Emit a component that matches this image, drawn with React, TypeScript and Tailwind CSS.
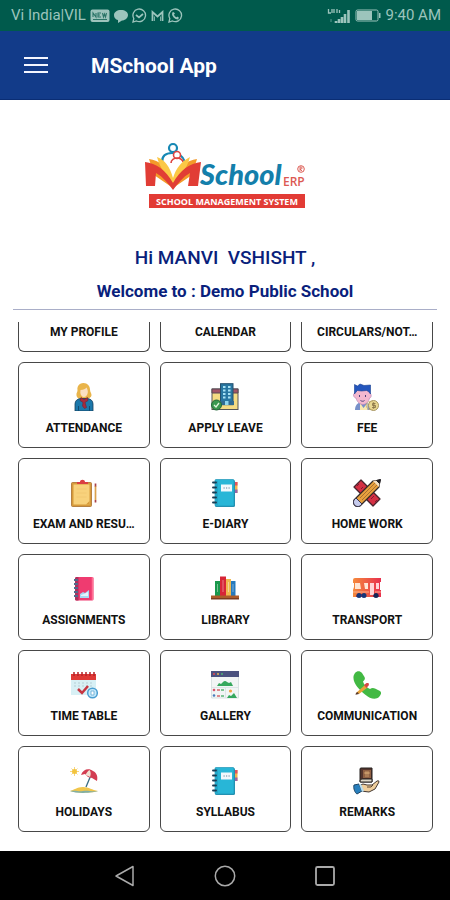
import type { ReactNode } from "react";

function Svg({ children }: { children: ReactNode }) {
  return (
    <svg viewBox="0 0 28 28" className="size-7" aria-hidden="true">
      {children}
    </svg>
  );
}

const Person = () => (
  <Svg>
    <path d="M13.500 0c-5 0-6.500 4-6 7 .3 2-1.500 3-1 5.500.5 3 3 3.500 7 3.500s8-1 8-4c0-2-1.500-3-1.500-5.500C20 3 17.500 0 13.500 0z" fill="#e9b44a" />
    <path d="M5 28v-7c0-3.500 2.500-5 5.500-5.500h7c3 .5 5.500 2 5.500 5.500v7z" fill="#1b78ab" stroke="#173f5c" strokeWidth=".8" />
    <path d="M10.500 7c3 0 5-1 6-2.500 1 2 1.500 3 1.300 5-.3 2.500-2 4.500-3.800 4.500s-3.600-2-3.700-4.500z" fill="#fbe0c4" />
    <path d="M11 14.500l3 2 3.500-2 .5 3-3 2 1.500 5-2 1-2-2.500.5-3.500-3-2z" fill="#a72a3c" stroke="#6c2237" strokeWidth=".6" />
    <path d="M8.500 23v5M19.500 23v5" stroke="#114c73" />
  </Svg>
);

const Building = () => (
  <Svg>
    <rect x="1" y="6" width="26" height="20.500" fill="#f5db83" stroke="#555" strokeWidth="1" />
    <path d="M1 6h26v4H1z" fill="#a35466" stroke="#574854" />
    <rect x="9.500" y=".7" width="12.500" height="21" fill="#2877a2" stroke="#24506e" />
    <path d="M12 4h2.500M17 4h2.500M12 7.500h2.500M17 7.500h2.500M12 11h2.500M17 11h2.500M12 14.500h2.500M17 14.500h2.500" stroke="#a7e2f5" strokeWidth="2" />
    <path d="M9 22v-4h14v4z" fill="#316b93" />
    <path d="M14 18h3.500v4H14z" fill="#8dd5ee" />
    <circle cx="5.500" cy="22" r="5" fill="#3b984f" stroke="#24683a" />
    <path d="M3 22l2 2 3-4" fill="none" stroke="#e1f5dd" strokeWidth="1.300" />
  </Svg>
);

const Boy = () => (
  <Svg>
    <path d="M2 27c0-6 4-8 8-8s8 2 8 8z" fill="#7891c9" />
    <path d="M7 20l3.500 5 4-5v7H7z" fill="#f8e9b2" />
    <path d="M2 10c-3 1-1 5 1 5 1 4 4 6.500 7 6.500s6-3 6.500-6.500c2 0 2.500-4 0-5L15 6H4z" fill="#f3b8cf" stroke="#ba86b6" strokeWidth=".7" />
    <path d="M1.500 11V1.500l3 1.500L7 1l4 1.500L17.500 2v9l-2-2.500-2-1-5 .5-4-.5L3 9z" fill="#2456bd" stroke="#183e91" strokeWidth=".6" />
    <path d="M6.500 12v2M12.500 12v2M7.500 17.500c1.500 1 3 1 4 0" stroke="#4c427b" fill="none" />
    <circle cx="20.500" cy="22.500" r="5" fill="#ead993" stroke="#a79561" />
    <circle cx="17.500" cy="22.500" r="4.200" fill="none" stroke="#c4ad6c" strokeWidth=".7" />
    <path d="M22.500 20.500h-3v2h3v2h-3.500M20.700 19.300v6.500" stroke="#8b7649" fill="none" strokeWidth=".9" />
  </Svg>
);

const Clipboard = () => (
  <Svg>
    <rect x="1.500" y="3.500" width="20" height="24" rx="1" fill="#d69a3a" stroke="#a86f2c" strokeWidth=".8" />
    <path d="M3.500 5.500h16v20h-16z" fill="#f8d27c" />
    <path d="M16 25.500l3.500-3.500v3.500z" fill="#d69a3a" />
    <path d="M7 5V3h3c0-3 5-3 5 0h3v2z" fill="#da3e42" />
    <path d="M6.500 10h10M6.500 14h10M6.500 18h10" stroke="#f0c56f" strokeWidth=".8" />
    <path d="M25.500 7v14" stroke="#dba24d" strokeWidth="1.700" />
    <path d="M25.500 4.500v3M25.500 21v2.500" stroke="#a84349" strokeWidth="1.700" />
  </Svg>
);

const Diary = () => (
  <Svg>
    <path d="M22 3h4.500v11H22z" fill="#f1b34b" />
    <path d="M22 3h4.500v3.500H22z" fill="#df5262" />
    <path d="M22 10.500h4.500V14H22z" fill="#9964a8" />
    <rect x="4" y="1" width="20" height="27" rx="1.500" fill="#278fae" />
    <rect x="4" y=".5" width="19" height="26.500" rx="1" fill="#28b6d7" stroke="#2197b8" strokeWidth=".7" />
    <path d="M6 2v24" stroke="#168fb1" strokeWidth=".8" />
    <path d="M10 5.500h11v7H10z" fill="#f1f8fc" />
    <path d="M12.500 9h1.200M15 9h1.200M17.500 9h1.200" stroke="#65849b" strokeWidth="1.200" />
    <path d="M2 3.500h3M2 8.500h3M2 13.500h3M2 18.500h3M2 23.500h3" stroke="#183e55" strokeWidth="1.900" strokeLinecap="round" />
  </Svg>
);

const Homework = () => (
  <Svg>
    <path d="M8 1L1 8l19 19 7-7z" fill="#d42f43" stroke="#48232d" strokeWidth="1.300" strokeLinejoin="round" />
    <path d="M4 7l2-2M8 10l2-2M18 20l3-3M22 23l2-2" stroke="#7e1c31" />
    <path d="M1 21L20 2l7-1-1 7L7 27c-4 2-8-2-6-6z" fill="#e8a13e" stroke="#342a28" strokeWidth="1.200" strokeLinejoin="round" />
    <path d="M3 19l6 6-2 2c-4 2-8-2-6-6z" fill="#c6cbed" stroke="#38364d" />
    <path d="M20 2l7-1-1 7z" fill="#f3dfc2" />
    <path d="M23.500 1.500l4-1-1 4z" fill="#1f1d22" stroke="#1f1d22" />
    <path d="M7 19L22 4M9 21L24 6" stroke="#8b5729" strokeWidth=".7" />
  </Svg>
);

const Notebook = () => (
  <Svg>
    <rect x="5" y="2" width="18.500" height="23.500" rx="1.500" fill="#ef3b70" />
    <path d="M5 3.500C5 2.500 6 2 7 2h1.500v23.500H7c-1 0-2-.5-2-1.500z" fill="#ad315c" />
    <path d="M22.500 2v23" stroke="#ff7195" strokeWidth="1.500" />
    <path d="M4 5h4M4 9h4M4 13h4M4 17h4M4 21h4" stroke="#53698b" strokeWidth="1.800" />
    <path d="M10 19l3-2 2 1 4-3v8h-9z" fill="#a7d8f1" />
    <path d="M11 20l3-1 4-2v4h-7z" fill="#e7f3fb" />
  </Svg>
);

const Books = () => (
  <Svg>
    <path d="M4 6h5v15H4z" fill="#19984c" />
    <path d="M9 1.500h6V21H9z" fill="#d72537" />
    <path d="M15 4h5v17h-5z" fill="#f0b74d" />
    <path d="M20 6h4.500v15H20z" fill="#277abd" />
    <path d="M6.500 9v8M12 5v12M17.500 7v10M22 9v8" stroke="#fff" strokeOpacity=".4" />
    <path d="M0 20.500h28v3.500H0z" fill="#ad5c2a" />
    <path d="M0 23h28v1.500H0z" fill="#7d3c20" />
  </Svg>
);

const Bus = () => (
  <Svg>
    <defs>
      <linearGradient id="bus" x1="0" x2="1">
        <stop stopColor="#f58a3c" />
        <stop offset="1" stopColor="#e8304e" />
      </linearGradient>
    </defs>
    <path d="M0 5q0-2 2-2h26v4h-1v8h1v7H0v-7l1-3V8H0z" fill="url(#bus)" />
    <path d="M2 8h5l1 6H2zM11 8h4v6h-3z" fill="#ffe6d4" />
    <path d="M17 8h4v12h-4zM23 8h3v6h-3z" fill="#ffd5d7" />
    <path d="M0 17h16M22 17h6" stroke="#ffb18e" />
    <path d="M3 22q0-3 3-3h4q3 0 3 3M20 22q0-3 3-3t3 3" fill="#9c284d" />
    <circle cx="6" cy="20.500" r="2.500" fill="#173678" />
    <circle cx="11" cy="20.500" r="2.500" fill="#173678" />
    <circle cx="23" cy="20.500" r="2.500" fill="#152757" />
  </Svg>
);

const Timetable = () => (
  <Svg>
    <path d="M1 4h25v20H1z" fill="#d8f0f5" />
    <path d="M1 3h25v6H1z" fill="#df3936" />
    <path d="M4 1v4M8 1v4M12 1v4M16 1v4M20 1v4M24 1v4" stroke="#b52227" strokeWidth="1.500" />
    <path d="M4 12h20M4 15h20" stroke="#b5ced6" strokeWidth="1.200" strokeDasharray="2 2" />
    <path d="M8 18l4 4 6-7" fill="none" stroke="#c63642" strokeWidth="2.500" />
    <circle cx="22.500" cy="22" r="4.800" fill="#c7eafb" stroke="#4a9ed1" strokeWidth="1.500" />
    <path d="M21 20v4h3v-4z" fill="#fff" stroke="#5fa8d3" strokeWidth=".8" />
  </Svg>
);

const Gallery = () => (
  <Svg>
    <path d="M.5 1h27v26H.5z" fill="#f2f5f5" stroke="#d9e2e2" />
    <path d="M0 0h28v6H0z" fill="#4b527f" />
    <circle cx="3" cy="3" r="1" fill="#e54853" />
    <circle cx="7" cy="3" r="1" fill="#e8b64d" />
    <circle cx="11" cy="3" r="1" fill="#4cb273" />
    <path d="M6 15l2-3 2 1 2-2q2-2 4 0l2 1 2-1 2 4zM16 27l2-3 2 1 3-3 3 5z" fill="#36a85e" />
    <path d="M1 16.500h26M14.500 17v10" stroke="#dce5e7" />
    <path d="M6 19h3M6 25h3" stroke="#d6666b" strokeWidth="1.500" />
    <path d="M10 19h3M10 25h3" stroke="#5db578" strokeWidth="1.500" />
    <circle cx="3" cy="19" r="1.300" fill="#d6546c" />
    <circle cx="3" cy="24.500" r="1.300" fill="#4a7dbb" />
    <circle cx="19.500" cy="20" r="1.600" fill="#efa447" />
  </Svg>
);

const Phone = () => (
  <Svg>
    <path d="M2 2C4-.5 7-.5 9 2l2.500 4c1 2 0 3-1.500 4.500 1 3.500 3.500 6 7 7.500 1.500-1 3-1.500 5-.5l5 2.500c2 1.500 1 4-1 6-3 3-9 2-14-2.500C5 18-3 9 2 2z" fill="#42b943" />
    <path d="M3 22l9-8 2.500 2.500L6 23z" fill="#e9a238" />
    <path d="M11 14l2.500-2h2l.5 2-2.500 3z" fill="#d64745" />
    <path d="M3 22l1.500-1L6 23l-3.500.8z" fill="#593b2d" />
  </Svg>
);

const Beach = () => (
  <Svg>
    <path d="M0 24c4-1 7-4 13-4s9 3 15 4c-5 2-22 2-28 0z" fill="#f1c64c" />
    <path d="M0 24c7-1 8 1 13 0s8 1 15 0c-4 2-22 3-28 0z" fill="#81afa4" />
    <path d="M16 20l5-12" stroke="#396d85" strokeWidth="1.300" />
    <path d="M11 8C13 2 19 1 23 4c4 2 5 6 4 10l-5-3-4-1-3-3z" fill="#d33d52" />
    <path d="M15.500 8c1-2 2-4 4-5 1.500 2 1.500 4 .5 7l-2-1z" fill="#f0e3d3" />
    <path d="M4.500 0v9M0 4.500h9M1.500 1.500l6 6M7.500 1.500l-6 6" stroke="#f8d580" />
    <circle cx="4.500" cy="4.500" r="2.500" fill="#f2c43e" />
  </Svg>
);

const Remarks = () => (
  <Svg>
    <path d="M7 2q0-1 1-1h11v14H7z" fill="#55352d" stroke="#24201f" />
    <path d="M10 3h8v8h-8z" fill="#906043" />
    <path d="M12 5h4v2h-4zM12 9h4" fill="#c69768" stroke="#c69768" />
    <path d="M7 14q0-2 2-2h10v3H8q-1 0-1-1z" fill="#ded8c8" stroke="#292423" />
    <path d="M5 19l5-2 4 1h5l5-4q2-1 2 1l-4 7-6 3-8-1-3-2z" fill="#efce9c" stroke="#433730" />
    <path d="M14 20h4l2-2" fill="none" stroke="#5e4935" />
    <path d="M1 18l5-1 3 7-5 3c-2-1-4-6-3-9z" fill="#287fbd" stroke="#1e4666" />
    <path d="M6 17l2 0 3 7-2 1z" fill="#b9dced" />
  </Svg>
);

const tiles: { label: string; Icon: () => ReactNode }[] = [
  { label: "ATTENDANCE", Icon: Person },
  { label: "APPLY LEAVE", Icon: Building },
  { label: "FEE", Icon: Boy },
  { label: "EXAM AND RESULT", Icon: Clipboard },
  { label: "E-DIARY", Icon: Diary },
  { label: "HOME WORK", Icon: Homework },
  { label: "ASSIGNMENTS", Icon: Notebook },
  { label: "LIBRARY", Icon: Books },
  { label: "TRANSPORT", Icon: Bus },
  { label: "TIME TABLE", Icon: Timetable },
  { label: "GALLERY", Icon: Gallery },
  { label: "COMMUNICATION", Icon: Phone },
  { label: "HOLIDAYS", Icon: Beach },
  { label: "SYLLABUS", Icon: Diary },
  { label: "REMARKS", Icon: Remarks },
];

// Labels are cut to the length that fits a tile on the narrowest phone.
const shorten = (label: string) => (label.length > 13 ? label.slice(0, 13) + "…" : label);

function StatusBar() {
  return (
    <div className="flex h-[31px] items-center justify-between bg-[#005a4c] pr-[9px] pl-[11px] text-[15px] text-[#9cc4bc]">
      <div className="flex items-center gap-1">
        <span>Vi India|VIL</span>
        <svg viewBox="0 0 20 14" className="h-[14px] w-5" aria-hidden="true">
          <rect x=".5" y=".5" width="19" height="12.500" rx="2" fill="#9cc4bc" />
          <path d="M3 8V4l3 4V4M11 4H8v4h3M8 6h2M12.500 4l1 4 1-3 1 3 1-4M3 10.500h14" fill="none" stroke="#2b7568" strokeWidth="1.100" />
        </svg>
        <svg viewBox="0 0 14 14" className="size-[14px]" aria-hidden="true">
          <path d="M7 1c4 0 7 2 7 5s-3 5.500-6 5.500L4 14v-3C1.500 10.500 0 8.500 0 6.200 0 3 3 1 7 1z" fill="#9cc4bc" />
        </svg>
        <svg viewBox="0 0 15 15" className="size-[15px]" fill="none" stroke="#9cc4bc" strokeWidth="1.300" aria-hidden="true">
          <path d="M1 14l.8-3.500A6.300 6.300 0 1 1 4.500 13z" />
          <path d="M4 7l3 2.500L11 6" strokeWidth="1.700" />
        </svg>
        <svg viewBox="0 0 13 12" className="h-3 w-[13px]" fill="none" stroke="#9cc4bc" aria-hidden="true">
          <path d="M1.500 11V2l5 4.500 5-4.500v9" strokeWidth="1.800" />
          <path d="M3.500 11V6.500M9.500 11V6.500" strokeWidth=".8" />
        </svg>
        <svg viewBox="0 0 15 15" className="size-[15px]" fill="none" stroke="#9cc4bc" strokeWidth="1.300" aria-hidden="true">
          <path d="M1 14l.8-3.500A6.300 6.300 0 1 1 4.500 13z" />
          <path d="M5 4.500c-1 3 2.500 6.500 5.500 6M5 4.500l1.300 1.800M10.500 10.500l-1.800-1.300" strokeWidth="1.700" />
        </svg>
      </div>
      <div className="flex items-center gap-1">
        <svg viewBox="0 0 24 14" className="h-[14px] w-6" aria-hidden="true">
          <path d="M1.500 0v4H4M5 0v4M7 0v4M10 0v4M12.500 1v3" stroke="#9cc4bc" strokeWidth="1.300" fill="none" />
          <path d="M9 14v-2M12 14v-4M15 14V8M18 14V5M21.500 14V1" stroke="#9cc4bc" strokeWidth="2.600" />
          <path d="M4 10v3" stroke="#5b9a8f" />
        </svg>
        <svg viewBox="0 0 26 13" className="h-[13px] w-[26px]" aria-hidden="true">
          <rect x="1" y="1" width="22" height="11" rx="1.500" fill="none" stroke="#9cc4bc" />
          <path d="M2 2h15v9H2zM24 4h1.500v5H24z" fill="#9cc4bc" />
        </svg>
        <span>9:40 AM</span>
      </div>
    </div>
  );
}

function Logo() {
  return (
    <svg viewBox="0 0 164 70" className="h-[70px] w-[164px]" role="img" aria-label="MSchool ERP School Management System">
      <circle cx="30" cy="6" r="4" fill="#fff" stroke="#1688b4" strokeWidth="2.200" />
      <path d="M19 20c0-6 4-9 10-9s11 3 13 9" fill="none" stroke="#1688b4" strokeWidth="2.200" />
      <circle cx="34" cy="13" r="3.500" fill="#fff" stroke="#dd4440" strokeWidth="1.600" />
      <path d="M28 21c0-3 3-5 6-5s6 2 6 4" fill="none" stroke="#dd4440" strokeWidth="1.600" />
      <path d="M6 17c10 1 19 8 24 21 5-13 14-20 24-21l-5 16-19 13-19-13z" fill="#f39a2a" />
      <path d="M14 15c8 3 13 10 16 21 3-10 9-17 17-21-3 12-10 19-17 26-7-7-13-15-16-26z" fill="#fbc846" />
      <path d="M2 20c11 1 21 8 28 21 7-13 17-20 28-21l-3 24H45l2-13c-7 4-12 10-17 17-5-7-10-13-17-17l-1 13H3z" fill="#e13d35" />
      <text x="57" y="43" fill="#147fab" fontFamily="Lato, sans-serif" fontStyle="italic" fontWeight="900" fontSize="29">School</text>
      <text x="140" y="44" fill="#dc5a52" fontFamily="Open Sans, sans-serif" fontWeight="600" fontSize="12">ERP</text>
      <circle cx="158" cy="27" r="3.300" fill="#fff" stroke="#dc5a52" />
      <path d="M157 29v-4h1.500q1.500 1 0 2H157l2 2" fill="none" stroke="#dc5a52" strokeWidth=".9" />
      <rect x="6" y="52" width="156" height="14" fill="#e23b35" />
      <text x="84" y="62.500" textAnchor="middle" fill="#fff" fontFamily="Open Sans, sans-serif" fontWeight="700" fontSize="9">SCHOOL MANAGEMENT SYSTEM</text>
    </svg>
  );
}

export default function App() {
  return (
    <div className="flex min-h-screen flex-col bg-white font-['Roboto',sans-serif]">
      <StatusBar />
      <header className="flex h-[69px] items-center border-b border-[#0a2d74] bg-[#123b89] px-6 pt-1">
        <button type="button" aria-label="Open menu" className="flex w-6 flex-col gap-[5px] pb-1">
          <span className="h-[2px] w-full bg-[#f4f6ff]" />
          <span className="h-[2px] w-full bg-[#f4f6ff]" />
          <span className="h-[2px] w-full bg-[#f4f6ff]" />
        </button>
        <h1 className="ml-[43px] text-[21px] font-bold text-white">MSchool App</h1>
      </header>
      <main className="flex grow flex-col">
        <div className="flex justify-center pt-[42px]">
          <Logo />
        </div>
        <div className="mx-[13px] border-b border-[#a9aec8] pb-[6px] text-center text-[#0a1f7c]">
          <p className="mt-[34px] text-[19px] leading-6 font-medium whitespace-pre">Hi MANVI  VSHISHT ,</p>
          <p className="mt-[9px] text-[17px] leading-6 font-bold">Welcome to : Demo Public School</p>
        </div>
        <div className="grid grid-cols-3 gap-[10px] pt-3 pr-[17px] pb-[18px] pl-[18px] text-[12px] leading-4 font-bold text-[#111]">
          {["MY PROFILE", "CALENDAR", "CIRCULARS/NOTICE"].map((label) => (
            <button key={label} type="button" className="h-[30px] rounded-b-md border border-t-0 border-[#484848] pb-[10px]">
              {shorten(label)}
            </button>
          ))}
          {tiles.map(({ label, Icon }) => (
            <button key={label} type="button" className="flex h-[86px] flex-col items-center gap-[9px] rounded-md border border-[#484848] pt-5 whitespace-nowrap">
              <Icon />
              {shorten(label)}
            </button>
          ))}
        </div>
      </main>
      <nav className="flex h-[49px] items-center justify-center gap-[78px] bg-black">
        <button type="button" aria-label="Back">
          <svg viewBox="0 0 22 22" className="size-[22px]" fill="none" stroke="#aaa" strokeWidth="1.500" strokeLinejoin="round"><path d="M19 1.500v19L2 11z" /></svg>
        </button>
        <button type="button" aria-label="Home">
          <svg viewBox="0 0 22 22" className="size-[22px]" fill="none" stroke="#aaa" strokeWidth="1.500"><circle cx="11" cy="11" r="9.700" /></svg>
        </button>
        <button type="button" aria-label="Recent apps">
          <svg viewBox="0 0 22 22" className="size-[22px]" fill="none" stroke="#aaa" strokeWidth="1.800"><rect x="2" y="2" width="18" height="18" rx="1.500" /></svg>
        </button>
      </nav>
    </div>
  );
}
